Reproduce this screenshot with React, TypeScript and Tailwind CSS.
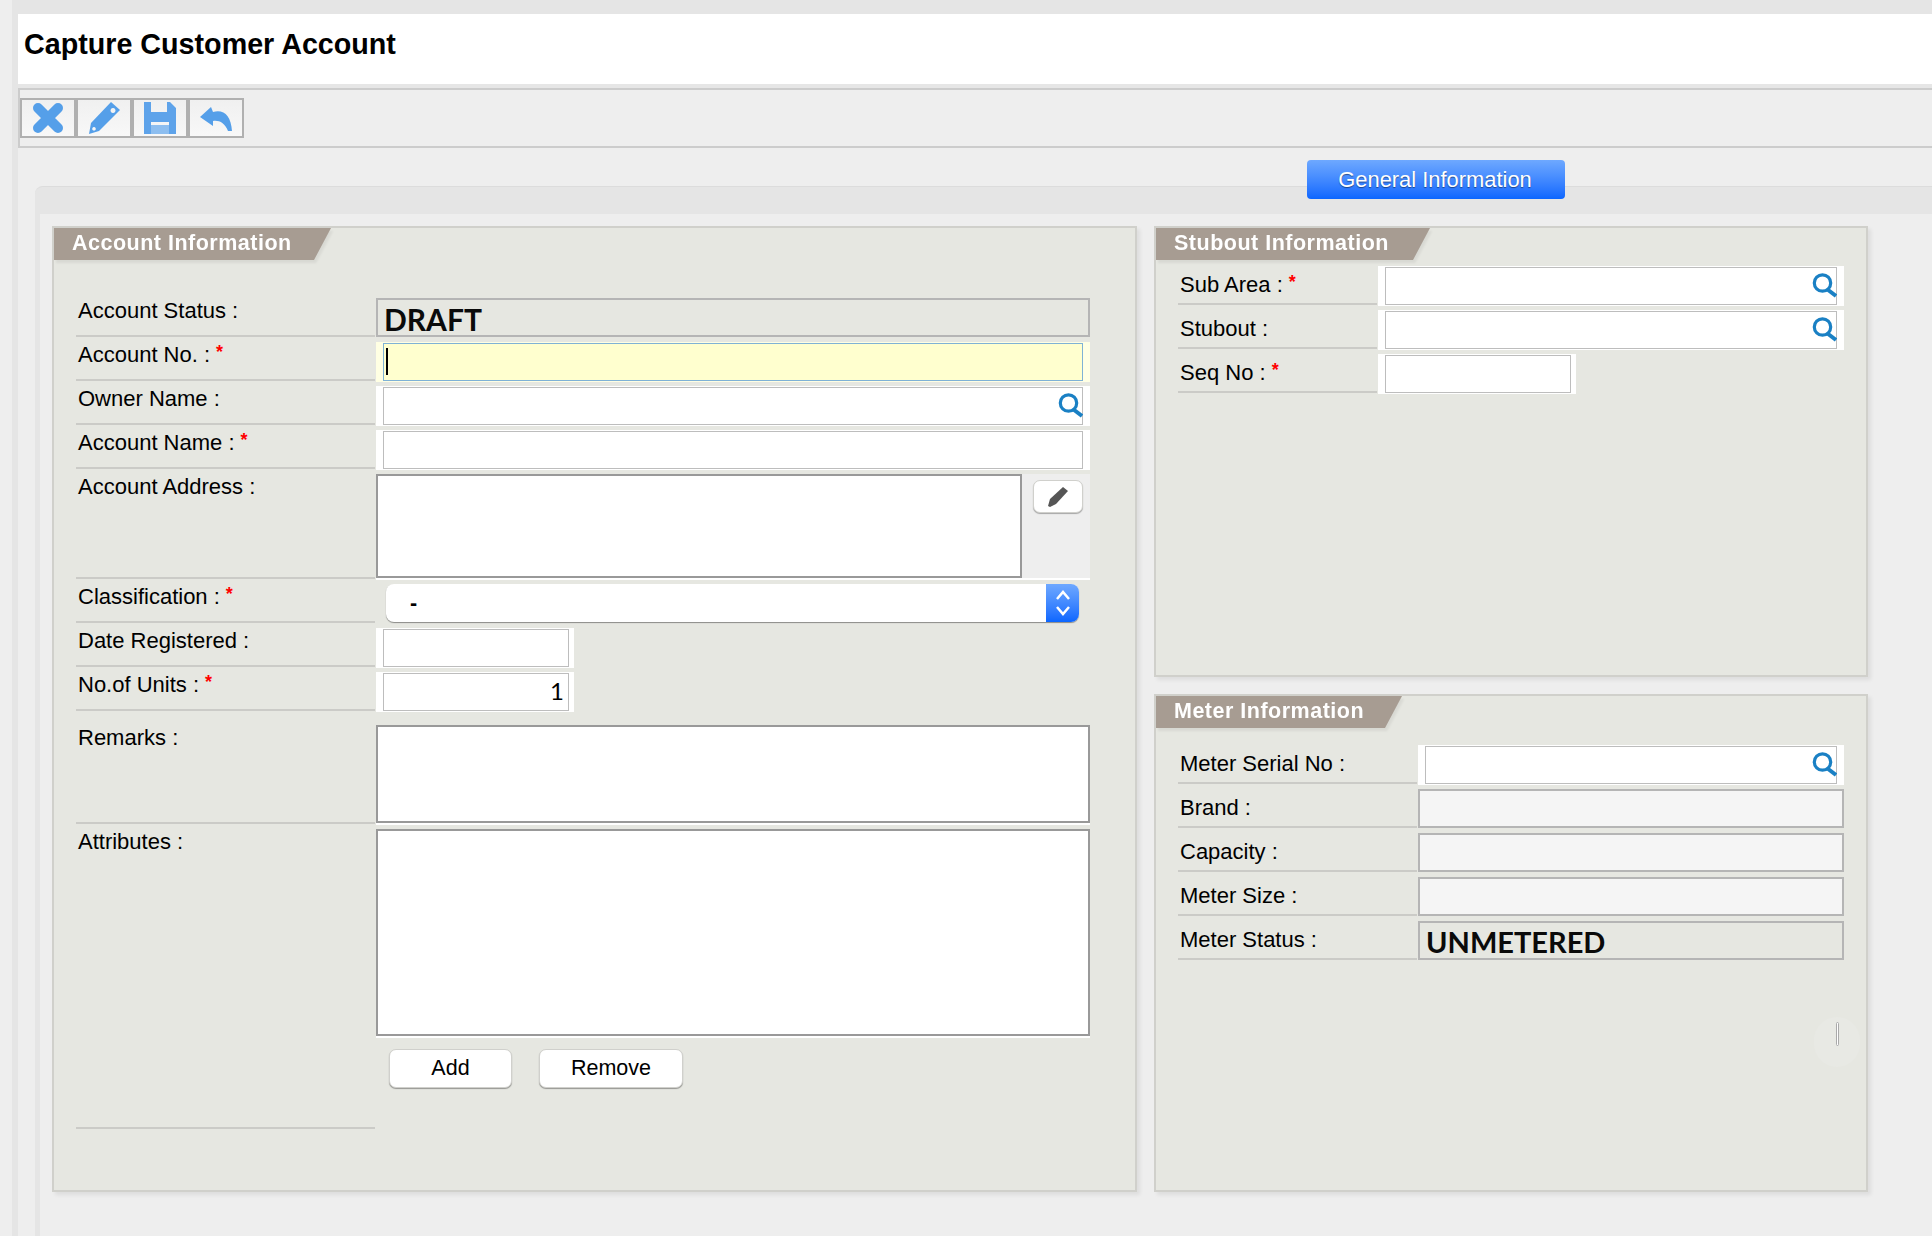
import React from 'react';

const SearchIcon = () => (
  <svg className="absolute right-0 top-[6px]" width="25" height="25" viewBox="0 0 25 25" fill="none" stroke="#1a80c4">
    <circle cx="10.5" cy="10" r="8.2" strokeWidth="3.2" />
    <path d="M15.5 16.5 L24 23" strokeWidth="4" />
  </svg>
);

const ToolButton: React.FC<{ children: React.ReactNode; w: string }> = ({ children, w }) => (
  <button className={`${w} h-full flex items-center justify-center border-2 border-[#b0b0b0] bg-gradient-to-b from-[#f0f0f0] to-[#f8f8f8]`}>
    {children}
  </button>
);

const Header: React.FC<{ title: string; w: string }> = ({ title, w }) => (
  <div className="drop-shadow-[2px_3px_1px_rgba(0,0,0,0.06)]">
    <div className={`${w} h-[32px] pl-[18px] bg-[#a79c92] [clip-path:polygon(0_0,100%_0,calc(100%_-_17px)_100%,0_100%)] text-white font-bold text-[21.5px] leading-[30px] tracking-[0.5px]`}>
      {title}
    </div>
  </div>
);

const Row: React.FC<{
  label: string;
  required?: boolean;
  labelW: string;
  h?: string;
  top?: string;
  children: React.ReactNode;
}> = ({ label, required, labelW, h = 'h-[40px]', top = 'pt-0', children }) => (
  <div className={`flex gap-px ${h}`}>
    <div className={`${labelW} shrink-0 mb-px ${top} pl-[2px] border-b-2 border-[#cbcbc7] text-[22px] leading-[25px] text-black`}>
      {label} :{required && <span className="relative -top-[4px] ml-[6px] text-[#f00] font-bold text-[18px]">*</span>}
    </div>
    {children}
  </div>
);

const TextField: React.FC<{ w: string; search?: boolean; value?: string; narrow?: boolean }> = ({ w, search, value, narrow }) => (
  <div className={`${w} h-full bg-white pl-[7px] ${narrow ? 'pr-[5px]' : 'pr-[7px]'} py-px`}>
    <div className="relative h-[38px]">
      <input
        readOnly
        value={value ?? ''}
        className="w-full h-full border border-[#bdbdbd] bg-white outline-none px-[4px] pb-[4px] text-right text-[24px] font-['Lato',sans-serif] text-black"
      />
      {search && <SearchIcon />}
    </div>
  </div>
);

const ReadonlyBox: React.FC<{ value?: string; fill?: string; w?: string; size?: string }> = ({
  value,
  fill = 'bg-[#f5f5f5]',
  w = 'w-[426px]',
  size = 'text-[30px]',
}) => (
  <div className={`${w} h-[39px] border-2 border-[#b5b5b5] ${fill} pl-[6px] font-['Lato',sans-serif] font-bold ${size} leading-[38px] text-[#0a0a0a]`}>
    {value}
  </div>
);

const AreaField: React.FC<{ w: string }> = ({ w }) => (
  <textarea readOnly className={`${w} block h-full resize-none border-2 border-[#999] bg-white outline-none`} />
);

const WhiteButton: React.FC<{ w: string; children: React.ReactNode }> = ({ w, children }) => (
  <button className={`${w} h-[39px] bg-white rounded-[7px] border border-[#d0d0cc] shadow-[0_1px_1px_rgba(0,0,0,0.35)] text-black`}>
    {children}
  </button>
);

const panel = 'bg-[#e6e7e1] border-2 border-[#d0d0cb] shadow-[3px_3px_4px_rgba(0,0,0,0.07)]';

export default function App() {
  return (
    <div className="w-[1932px] h-[1236px] overflow-hidden flex bg-[#eeeeee] font-['Liberation_Sans',Arial,sans-serif] text-[21.5px]">
      <div className="w-[12px] shrink-0" />
      <div className="flex-1 min-w-0 bg-[#e5e5e5] pt-[14px] pl-[6px]">
        <div className="h-full bg-[#eeeeee]">
          {/* title */}
          <div className="h-[70px] bg-white pt-[14px] pl-[6px] font-bold text-[28.7px] leading-[32px] text-black">
            Capture Customer Account
          </div>
          <div className="h-[4px] bg-[#e6e6e6]" />

          {/* toolbar */}
          <div className="h-[60px] border-y-2 border-[#cccccc] border-l-2 pt-[8px] bg-[#eeeeee]">
            <div className="h-[40px] flex">
              <ToolButton w="w-[56px]">
                <svg width="34" height="34" viewBox="0 0 34 34">
                  <path d="M7 7 L27 27 M27 7 L7 27" stroke="#559fe9" strokeWidth="10" fill="none" strokeLinecap="round" />
                </svg>
              </ToolButton>
              <ToolButton w="w-[56px]">
                <svg width="34" height="34" viewBox="0 0 34 34">
                  <path fillRule="evenodd" fill="#559fe9" d="M24 1 L33 9 L12 30 L2 33 L4 22 Z M26 7 a2.5 2.5 0 1 0 .01 0 Z M7 26 a1.8 1.8 0 1 0 .01 0 Z" />
                </svg>
              </ToolButton>
              <ToolButton w="w-[56px]">
                <svg width="34" height="34" viewBox="0 0 34 34">
                  <path fill="#5ea3ea" fillRule="evenodd" d="M1 1 H27 L33 7 V33 H1 Z M8 1 V11 H24 V1 Z M8 21 V33 H26 V21 Z" />
                  <rect x="8" y="24" width="18" height="9" fill="#8dbef0" />
                </svg>
              </ToolButton>
              <ToolButton w="w-[56px]">
                <svg width="34" height="34" viewBox="0 0 34 34">
                  <path fill="#559fe9" d="M1 16 L12 6 L14 11 C25 8 32 15 33 30 L29 30 C26 22 20 19 14 20 L14 25 Z" />
                </svg>
              </ToolButton>
            </div>
          </div>

          {/* tab strip and panels */}
          <div className="mt-[38px] ml-[17px] bg-[#e5e5e5] border-t border-[#dcdcdc] rounded-tl-[8px]">
            <div className="-mt-px">
              <button className="block relative -top-[26px] -mb-[11px] ml-[1272px] w-[258px] h-[39px] pr-[2px] pt-[2px] rounded-[4px] bg-gradient-to-b from-[#6ea8ff] to-[#0a66ff] text-[21.9px] text-white [text-shadow:0_1px_1px_rgba(0,0,0,0.45)]">
                General Information
              </button>
            </div>
            <div className="ml-[5px] bg-[#eeeeee] pt-[12px] pl-[12px] pb-[60px] flex gap-[17px]">
              {/* left */}
              <div className={`${panel} w-[1085px] h-[966px] px-[22px]`}>
                <div className="-ml-[22px]">
                  <Header title="Account Information" w="w-[277px]" />
                </div>
                <div className="mt-[38px] flex flex-col gap-[4px]">
                  <Row label="Account Status" labelW="w-[299px]">
                    <ReadonlyBox value="DRAFT" fill="bg-transparent" w="w-[714px]" />
                  </Row>
                  <Row label="Account No." required labelW="w-[299px]">
                    <div className="w-[714px] h-full bg-[#ffffe3] px-[7px] py-px">
                      <div className="h-[38px] border border-[#7fb2d6] bg-[#ffffcf] pl-[2px] pt-[4px]">
                        <div className="w-[2px] h-[27px] bg-black" />
                      </div>
                    </div>
                  </Row>
                  <Row label="Owner Name" labelW="w-[299px]">
                    <TextField w="w-[714px]" search />
                  </Row>
                  <Row label="Account Name" required labelW="w-[299px]">
                    <TextField w="w-[714px]" />
                  </Row>
                  <Row label="Account Address" labelW="w-[299px]" h="h-[106px]">
                    <div className="w-[714px] h-full flex border-b-2 border-white bg-[#eeeeee]">
                      <AreaField w="w-[646px]" />
                      <div className="pl-[11px] pt-[6px]">
                        <button className="w-[50px] h-[33px] flex items-center justify-center bg-white rounded-[7px] border border-[#d0d0cc] shadow-[0_1px_1px_rgba(0,0,0,0.3)]">
                          <svg width="22" height="22" viewBox="0 0 22 22">
                            <path fill="#555" d="M16 1 L21 5 L9 18 L3 21 L1 20 L3 13 Z" />
                          </svg>
                        </button>
                      </div>
                    </div>
                  </Row>
                  <Row label="Classification" required labelW="w-[299px]">
                    <div className="ml-[10px] w-[693px] h-[38px] flex bg-white rounded-[8px] overflow-hidden shadow-[0_1px_1px_rgba(0,0,0,0.4)]">
                      <div className="flex-1 pl-[24px] leading-[38px] text-black font-bold">-</div>
                      <div className="w-[33px] flex items-center justify-center bg-gradient-to-b from-[#6ea8ff] to-[#0a66ff]">
                        <svg width="18" height="30" viewBox="0 0 18 30" fill="none" stroke="white" strokeWidth="2.5">
                          <path d="M3 11 L9 4 L15 11 M3 19 L9 26 L15 19" />
                        </svg>
                      </div>
                    </div>
                  </Row>
                  <Row label="Date Registered" labelW="w-[299px]">
                    <TextField w="w-[198px]" narrow />
                  </Row>
                  <Row label="No.of Units" required labelW="w-[299px]">
                    <TextField w="w-[198px]" narrow value="1" />
                  </Row>
                  <div className="h-[5px]" />
                  <Row label="Remarks" labelW="w-[299px]" h="h-[100px]">
                    <div className="w-[714px] h-full border-b-2 border-white">
                      <AreaField w="w-full" />
                    </div>
                  </Row>
                  <Row label="Attributes" labelW="w-[299px]" h="h-[301px]">
                    <div className="w-[714px]">
                      <div className="h-[209px] border-b-2 border-white">
                        <AreaField w="w-full" />
                      </div>
                      <div className="mt-[11px] pl-[13px] flex gap-[27px]">
                        <WhiteButton w="w-[123px]">Add</WhiteButton>
                        <WhiteButton w="w-[144px]">Remove</WhiteButton>
                      </div>
                    </div>
                  </Row>
                </div>
              </div>

              {/* right */}
              <div className="w-[714px] flex flex-col gap-[17px]">
                <div className={`${panel} h-[451px] px-[22px]`}>
                  <div className="-ml-[22px]">
                    <Header title="Stubout Information" w="w-[274px]" />
                  </div>
                  <div className="mt-[6px] flex flex-col gap-[4px]">
                    <Row label="Sub Area" required labelW="w-[199px]" top="pt-[6px]">
                      <TextField w="w-[467px]" search />
                    </Row>
                    <Row label="Stubout" labelW="w-[199px]" top="pt-[6px]">
                      <TextField w="w-[467px]" search />
                    </Row>
                    <Row label="Seq No" required labelW="w-[199px]" top="pt-[6px]">
                      <TextField w="w-[198px]" narrow />
                    </Row>
                  </div>
                </div>

                <div className={`${panel} relative h-[498px] px-[22px]`}>
                  <div className="-ml-[22px]">
                    <Header title="Meter Information" w="w-[246px]" />
                  </div>
                  <div className="mt-[17px] flex flex-col gap-[4px]">
                    <Row label="Meter Serial No" labelW="w-[239px]" top="pt-[6px]">
                      <TextField w="w-[428px]" search />
                    </Row>
                    <Row label="Brand" labelW="w-[239px]" top="pt-[6px]">
                      <ReadonlyBox w="w-[428px]" />
                    </Row>
                    <Row label="Capacity" labelW="w-[239px]" top="pt-[6px]">
                      <ReadonlyBox w="w-[428px]" />
                    </Row>
                    <Row label="Meter Size" labelW="w-[239px]" top="pt-[6px]">
                      <ReadonlyBox w="w-[428px]" />
                    </Row>
                    <Row label="Meter Status" labelW="w-[239px]" top="pt-[6px]">
                      <ReadonlyBox value="UNMETERED" fill="bg-transparent" w="w-[428px]" size="text-[29px]" />
                    </Row>
                  </div>
                  {/* overlay scroll handle */}
                  <div className="absolute left-[658px] top-[321px] w-[46px] h-[50px] rounded-full bg-[#e8e9e4] flex justify-center pt-[5px]">
                    <div className="w-[3px] h-[24px] rounded-full bg-white border border-[#aaa]" />
                  </div>
                </div>
              </div>
            </div>
          </div>
        </div>
      </div>
    </div>
  );
}
